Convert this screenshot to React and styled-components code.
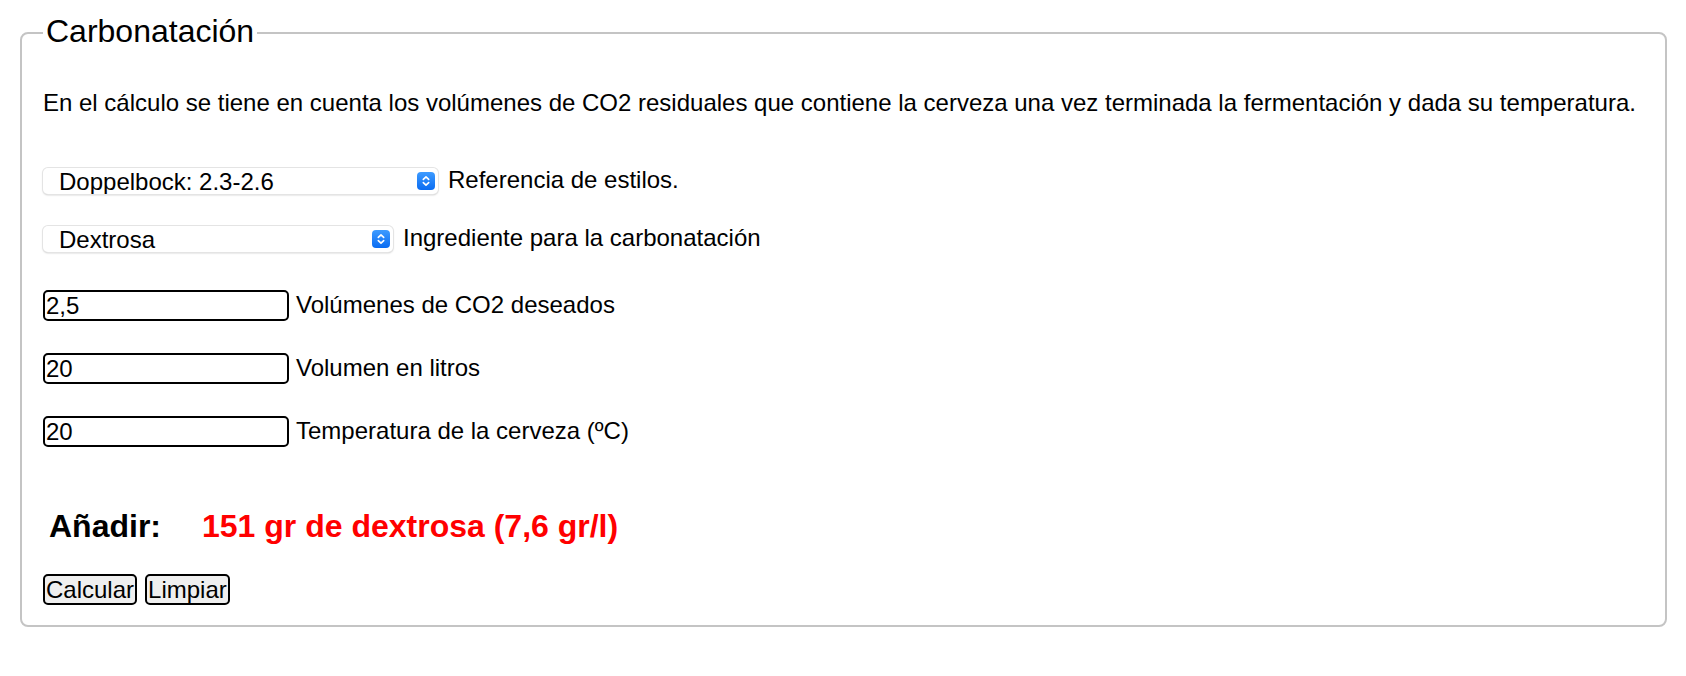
import React from "react";
import styled, { createGlobalStyle } from "styled-components";

const GlobalStyle = createGlobalStyle`
  body {
    margin: 0;
    background: #ffffff;
    font-family: "Liberation Sans", Arial, sans-serif;
    color: #000000;
  }
`;

const Page = styled.div`
  padding: 13px 19px 40px 20px;
`;

const StyledFieldset = styled.fieldset`
  margin: 0;
  min-width: 0;
  padding: 0 21px 20px 21px;
  border: 2px solid #c4c4c4;
  border-radius: 8px;
`;

const StyledLegend = styled.legend`
  padding: 0 3px 4px 3px;
  font-size: 32px;
  line-height: 36px;
`;

const Description = styled.p`
  margin: 36px 0 0 0;
  font-size: 24px;
  line-height: 28px;
`;

const Row = styled.div`
  display: flex;
  align-items: center;
  gap: ${(props) => props.$gap || 7}px;
  margin-top: ${(props) => props.$top}px;
`;

const Label = styled.span`
  font-size: 24px;
  line-height: 1;
  margin-top: -2px;
`;

const SelectWrap = styled.div`
  position: relative;
  width: ${(props) => props.$width}px;
  height: 26px;
`;

const StyledSelect = styled.select`
  appearance: none;
  -webkit-appearance: none;
  width: 100%;
  height: 100%;
  box-sizing: border-box;
  margin: 0;
  padding: 0 30px 0 16px;
  border: none;
  border-radius: 5px;
  background: #ffffff;
  box-shadow: 0 0 0 1px #e4e4e4, 0 1px 2px rgba(0, 0, 0, 0.28);
  font-family: "Liberation Sans", Arial, sans-serif;
  font-size: 24px;
  color: #000000;
  outline: none;
`;

const ArrowBadge = styled.svg`
  position: absolute;
  right: 3px;
  top: 4px;
  pointer-events: none;
`;

const TextInput = styled.input`
  width: 246px;
  height: 31px;
  box-sizing: border-box;
  margin: 0;
  padding: 0 0 0 1px;
  border: 2px solid #000000;
  border-radius: 5px;
  font-family: "Liberation Sans", Arial, sans-serif;
  font-size: 24px;
  line-height: 26px;
  color: #000000;
  background: #ffffff;
  outline: none;
`;

const Result = styled.div`
  display: flex;
  align-items: baseline;
  gap: 41px;
  margin: 60px 0 0 6px;
  font-size: 32px;
  line-height: 38px;
  font-weight: bold;
`;

const ResultValue = styled.span`
  color: #ff0000;
`;

const Buttons = styled.div`
  display: flex;
  gap: 8px;
  margin-top: 29px;
`;

const StyledButton = styled.button`
  height: 31px;
  box-sizing: border-box;
  margin: 0;
  padding: 0 1px;
  border: 2px solid #000000;
  border-radius: 5px;
  background: #efefef;
  font-family: "Liberation Sans", Arial, sans-serif;
  font-size: 24px;
  color: #000000;
  line-height: 1;
`;

function SelectArrows() {
  return (
    <ArrowBadge width="18" height="18" viewBox="0 0 18 18">
      <defs>
        <linearGradient id="selBlue" x1="0" y1="0" x2="0" y2="1">
          <stop offset="0" stopColor="#3d9bff" />
          <stop offset="1" stopColor="#0a6cf2" />
        </linearGradient>
      </defs>
      <rect x="0" y="0" width="18" height="18" rx="4" fill="url(#selBlue)" />
      <path
        d="M6.3 7.4 L9 4.8 L11.7 7.4 M6.3 10.6 L9 13.2 L11.7 10.6"
        fill="none"
        stroke="#ffffff"
        strokeWidth="1.6"
        strokeLinecap="round"
        strokeLinejoin="round"
      />
    </ArrowBadge>
  );
}

function SelectField({ width, value, options }) {
  return (
    <SelectWrap $width={width}>
      <StyledSelect defaultValue={value}>
        {options.map((option) => (
          <option key={option}>{option}</option>
        ))}
      </StyledSelect>
      <SelectArrows />
    </SelectWrap>
  );
}

export default function App() {
  return (
    <Page>
      <GlobalStyle />
      <StyledFieldset>
        <StyledLegend>Carbonatación</StyledLegend>
        <Description>
          En el cálculo se tiene en cuenta los volúmenes de CO2 residuales que
          contiene la cerveza una vez terminada la fermentación y dada su
          temperatura.
        </Description>

        <Row $top={51} $gap={10}>
          <SelectField
            width={395}
            value="Doppelbock: 2.3-2.6"
            options={["Doppelbock: 2.3-2.6", "Lager: 2.2-2.7", "Stout: 1.7-2.3"]}
          />
          <Label>Referencia de estilos.</Label>
        </Row>

        <Row $top={32} $gap={10}>
          <SelectField
            width={350}
            value="Dextrosa"
            options={["Dextrosa", "Sacarosa", "Extracto seco"]}
          />
          <Label>Ingrediente para la carbonatación</Label>
        </Row>

        <Row $top={38}>
          <TextInput defaultValue="2,5" />
          <Label>Volúmenes de CO2 deseados</Label>
        </Row>

        <Row $top={32}>
          <TextInput defaultValue="20" />
          <Label>Volumen en litros</Label>
        </Row>

        <Row $top={32}>
          <TextInput defaultValue="20" />
          <Label>Temperatura de la cerveza (ºC)</Label>
        </Row>

        <Result>
          <span>Añadir:</span>
          <ResultValue>151 gr de dextrosa (7,6 gr/l)</ResultValue>
        </Result>

        <Buttons>
          <StyledButton>Calcular</StyledButton>
          <StyledButton>Limpiar</StyledButton>
        </Buttons>
      </StyledFieldset>
    </Page>
  );
}
